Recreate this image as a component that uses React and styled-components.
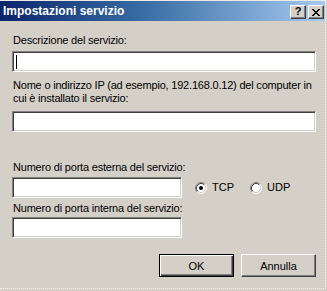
import styled, { createGlobalStyle } from 'styled-components';

const GlobalStyle = createGlobalStyle`
  html, body {
    margin: 0;
    padding: 0;
    background: #d4d0c8;
  }
  body {
    font-family: "Liberation Sans", Arial, sans-serif;
    font-size: 11px;
    color: #000;
  }
`;

const RadioIcon = ({ checked }) => (
  <svg width="12" height="12" viewBox="0 0 12 12">
    <circle cx="6" cy="6" r="4.2" fill="#fff" />
    <path d="M2.11 9.89 A5.5 5.5 0 0 1 9.89 2.11" fill="none" stroke="#808080" strokeWidth="1" />
    <path d="M9.89 2.11 A5.5 5.5 0 0 1 2.11 9.89" fill="none" stroke="#fff" strokeWidth="1" />
    <path d="M2.82 9.18 A4.5 4.5 0 0 1 9.18 2.82" fill="none" stroke="#404040" strokeWidth="1" />
    <path d="M9.18 2.82 A4.5 4.5 0 0 1 2.82 9.18" fill="none" stroke="#d4d0c8" strokeWidth="1" />
    {checked && <circle cx="6" cy="6" r="2" fill="#000" />}
  </svg>
);

const CloseGlyph = () => (
  <svg width="8" height="7" viewBox="0 0 8 7" shapeRendering="crispEdges">
    <path
      d="M0 0h2v1H0zM6 0h2v1H6zM1 1h2v1H1zM5 1h2v1H5zM2 2h4v1H2zM3 3h2v1H3zM2 4h4v1H2zM1 5h2v1H1zM5 5h2v1H5zM0 6h2v1H0zM6 6h2v1H6z"
      fill="#000"
    />
  </svg>
);

const App = () => {
  return (
    <>
      <GlobalStyle />
      <Frame>
        <Window>
          <TitleBar>
            <Title>Impostazioni servizio</Title>
            <CaptionButtons>
              <CaptionButton>
                <HelpGlyph>?</HelpGlyph>
              </CaptionButton>
              <CaptionButton>
                <CloseGlyph />
              </CaptionButton>
            </CaptionButtons>
          </TitleBar>

          <Body>
            <Label $top={13}>Descrizione del servizio:</Label>
            <TextBox $top={4}>
              <Caret />
            </TextBox>

            <Label $top={7}>
              Nome o indirizzo IP (ad esempio, 192.168.0.12) del computer in
              <br />
              cui è installato il servizio:
            </Label>
            <TextBox $top={6} />

            <Label $top={29}>Numero di porta esterna del servizio:</Label>
            <PortRow>
              <TextBox $top={0} $width={170} />
              <RadioGroup>
                <RadioItem>
                  <RadioIcon checked />
                  <span>TCP</span>
                </RadioItem>
                <RadioItem>
                  <RadioIcon />
                  <span>UDP</span>
                </RadioItem>
              </RadioGroup>
            </PortRow>

            <Label $top={4}>Numero di porta interna del servizio:</Label>
            <TextBox $top={2} $width={170} />

            <ButtonRow>
              <PushButton $default>OK</PushButton>
              <PushButton>Annulla</PushButton>
            </ButtonRow>
          </Body>
        </Window>
      </Frame>
    </>
  );
};

const Frame = styled.div`
  width: 327px;
  height: 291px;
  box-sizing: border-box;
  background: #d4d0c8;
  border-top: 1px solid #ecebe7;
  border-right: 1px solid #d4d0c8;
`;

const Window = styled.div`
  height: 288px;
  box-sizing: border-box;
  border-right: 1px dotted #f4f3f0;
  border-bottom: 1px dotted #f4f3f0;
  display: flex;
  flex-direction: column;
`;

const TitleBar = styled.div`
  height: 20px;
  box-sizing: border-box;
  padding: 0 1px 0 3px;
  display: flex;
  align-items: center;
  justify-content: space-between;
  background: linear-gradient(to right, #0a246a 0%, #3a6ea5 45%, #a6caf0 100%);
`;

const Title = styled.div`
  color: #fff;
  font-family: "Liberation Sans", Arial, sans-serif;
  font-weight: bold;
  font-size: 12px;
  line-height: 20px;
  white-space: nowrap;
`;

const CaptionButtons = styled.div`
  display: flex;
  gap: 2px;
  align-self: flex-start;
  padding-top: 4px;
`;

const CaptionButton = styled.div`
  width: 16px;
  height: 14px;
  box-sizing: border-box;
  background: #d4d0c8;
  border: 1px solid;
  border-color: #fff #404040 #404040 #fff;
  box-shadow: inset -1px -1px #808080;
  display: flex;
  align-items: center;
  justify-content: center;
`;

const HelpGlyph = styled.span`
  font-family: "Liberation Sans", Arial, sans-serif;
  font-weight: bold;
  font-size: 11px;
  line-height: 11px;
  margin-top: -1px;
`;

const Body = styled.div`
  flex: 1;
  padding: 0 9px 0 12px;
  display: flex;
  flex-direction: column;
`;

const Label = styled.div`
  margin-top: ${(p) => p.$top}px;
  padding-left: 1px;
  font-size: 11px;
  line-height: 13px;
  letter-spacing: -0.2px;
  white-space: nowrap;
`;

const TextBox = styled.div`
  margin-top: ${(p) => p.$top}px;
  width: ${(p) => (p.$width ? `${p.$width}px` : '100%')};
  height: 21px;
  box-sizing: border-box;
  background: #fff;
  border: 1px solid;
  border-color: #808080 #fff #fff #808080;
  box-shadow: inset 1px 1px #404040, inset -1px -1px #d4d0c8;
  display: flex;
  align-items: center;
  padding-left: 3px;
`;

const Caret = styled.span`
  width: 1px;
  height: 14px;
  background: #000;
`;

const PortRow = styled.div`
  margin-top: 3px;
  display: flex;
  align-items: center;
`;

const RadioGroup = styled.div`
  display: flex;
  align-items: center;
  gap: 16px;
  margin-left: 13px;
`;

const RadioItem = styled.div`
  display: flex;
  align-items: center;
  gap: 5px;
  font-size: 11px;
  line-height: 13px;
  svg {
    display: block;
  }
`;

const ButtonRow = styled.div`
  margin-top: 16px;
  display: flex;
  justify-content: flex-end;
  gap: 7px;
`;

const PushButton = styled.div`
  width: 75px;
  height: 23px;
  box-sizing: border-box;
  display: flex;
  align-items: center;
  justify-content: center;
  font-size: 11px;
  background: #d4d0c8;
  border: 1px solid;
  border-color: ${(p) => (p.$default ? '#000' : '#fff #404040 #404040 #fff')};
  box-shadow: ${(p) =>
    p.$default
      ? 'inset 1px 1px #fff, inset -1px -1px #404040, inset -2px -2px #808080'
      : 'inset -1px -1px #808080'};
`;

export default App;
